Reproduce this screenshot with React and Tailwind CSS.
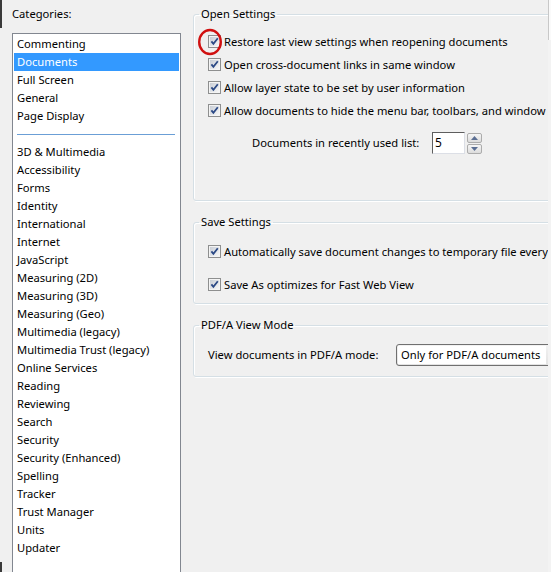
import React from "react";

const topItems = ["Commenting", "Documents", "Full Screen", "General", "Page Display"];
const bottomItems = [
  "3D & Multimedia",
  "Accessibility",
  "Forms",
  "Identity",
  "International",
  "Internet",
  "JavaScript",
  "Measuring (2D)",
  "Measuring (3D)",
  "Measuring (Geo)",
  "Multimedia (legacy)",
  "Multimedia Trust (legacy)",
  "Online Services",
  "Reading",
  "Reviewing",
  "Search",
  "Security",
  "Security (Enhanced)",
  "Spelling",
  "Tracker",
  "Trust Manager",
  "Units",
  "Updater",
];

function Check() {
  return (
    <svg width="13" height="13" viewBox="0 0 13 13" className="shrink-0">
      <defs>
        <linearGradient id="cbg" x1="0" y1="0" x2="1" y2="1">
          <stop offset="0" stopColor="#c9ced6" />
          <stop offset="1" stopColor="#f7f7f7" />
        </linearGradient>
      </defs>
      <rect x="0.5" y="0.5" width="12" height="12" fill="#f4f4f4" stroke="#8e8f8f" />
      <rect x="2" y="2" width="9" height="9" fill="url(#cbg)" />
      <path d="M3.4 6.4 L5.4 8.9 L9.8 3.3" fill="none" stroke="#2c4a86" strokeWidth="1.8" strokeLinejoin="miter" />
    </svg>
  );
}

function Row({ children, circled }) {
  return (
    <div className="relative flex h-[23px] items-center gap-[3px]">
      <Check />
      <span className="whitespace-nowrap">{children}</span>
      {circled && (
        <svg width="26" height="28" viewBox="0 0 26 28" className="pointer-events-none absolute left-[-11px] top-[-2px]">
          <ellipse cx="13" cy="14" rx="10.8" ry="12" fill="none" stroke="#d01010" strokeWidth="2.4" />
        </svg>
      )}
    </div>
  );
}

function Group({ title, children, className = "" }) {
  return (
    <fieldset className={`w-[420px] rounded-[3px] border border-[#d5dfe5] p-0 shadow-[inset_1px_1px_0_#fff,1px_1px_0_#fff] ${className}`}>
      <legend className="ml-[5px] px-[2px] leading-[16px]">{title}</legend>
      {children}
    </fieldset>
  );
}

export default function App() {
  return (
    <div className="flex h-[572px] w-[551px] overflow-hidden bg-[#f0f0f0] font-['Noto_Sans',sans-serif] text-[11.2px] leading-[16px] text-black">
      <div className="flex w-[2px] flex-col justify-between">
        <div className="h-[28px] bg-[#3a3a3a]" />
        <div className="h-[10px] bg-[#3a3a3a]" />
      </div>

      <div className="flex w-[191px] shrink-0 flex-col pl-[10px] pt-[6px]">
        <div className="h-[16px]">Categories:</div>
        <div className="mt-[11px] w-[169px] flex-1 overflow-hidden border-x border-t border-[#828790] bg-white pt-[1px]">
          {topItems.map((t) => (
            <div
              key={t}
              className={`mx-[1px] flex h-[18px] items-center whitespace-nowrap pl-[3px] ${
                t === "Documents" ? "bg-[#3399ff] text-white" : ""
              }`}
            >
              {t}
            </div>
          ))}
          <div className="flex h-[18px] items-center px-[4px]">
            <div className="h-px w-[158px] bg-[#6b9fd6]" />
          </div>
          {bottomItems.map((t) => (
            <div key={t} className="mx-[1px] flex h-[18px] items-center whitespace-nowrap pl-[3px]">
              {t}
            </div>
          ))}
        </div>
      </div>

      <div className="w-[355px] shrink-0 overflow-hidden pt-[6px]">
        <Group title="Open Settings">
          <div className="pb-[46px] pl-[14px] pt-[8px]">
            <Row circled>Restore last view settings when reopening documents</Row>
            <Row>Open cross-document links in same window</Row>
            <Row>Allow layer state to be set by user information</Row>
            <Row>Allow documents to hide the menu bar, toolbars, and window controls</Row>
            <div className="ml-[44px] mt-[10px] flex h-[22px] items-center">
              <span className="w-[180px] whitespace-nowrap">Documents in recently used list:</span>
              <div className="flex h-[22px] w-[33px] items-center border border-b-[#dcdfe6] border-l-[#5e5e5e] border-r-[#dcdfe6] border-t-[#5e5e5e] bg-white pl-[2px] text-[12px]">
                5
              </div>
              <div className="ml-[2px] flex h-[21px] w-[15px] flex-col justify-between">
                <div className="flex h-[10px] items-center justify-center rounded-[2px] border border-[#acacac] bg-gradient-to-b from-[#f6f6f6] to-[#dcdcdc]">
                  <svg width="7" height="4" viewBox="0 0 7 4">
                    <path d="M0 4 L3.5 0 L7 4 Z" fill="#5b6f93" />
                  </svg>
                </div>
                <div className="flex h-[10px] items-center justify-center rounded-[2px] border border-[#acacac] bg-gradient-to-b from-[#f6f6f6] to-[#dcdcdc]">
                  <svg width="7" height="4" viewBox="0 0 7 4">
                    <path d="M0 0 L3.5 4 L7 0 Z" fill="#5b6f93" />
                  </svg>
                </div>
              </div>
            </div>
          </div>
        </Group>

        <Group title="Save Settings" className="mt-[13px]">
          <div className="pb-[7px] pl-[14px] pt-[10px]">
            <Row>Automatically save document changes to temporary file every 5 minutes</Row>
            <div className="mt-[10px]">
              <Row>Save As optimizes for Fast Web View</Row>
            </div>
          </div>
        </Group>

        <Group title="PDF/A View Mode" className="mt-[13px]">
          <div className="flex items-center pb-[10px] pl-[14px] pt-[11px]">
            <span className="w-[188px] whitespace-nowrap">View documents in PDF/A mode:</span>
            <div className="flex h-[22px] w-[200px] items-center rounded-[3px] border border-[#707070] bg-gradient-to-b from-[#f2f2f2] to-[#e3e3e3] pl-[1px]">
              <div className="flex h-[18px] w-[148px] items-center whitespace-nowrap bg-white pl-[3px]">
                Only for PDF/A documents
              </div>
            </div>
          </div>
        </Group>
      </div>

      <div className="flex w-[3px] shrink-0 flex-col">
        <div className="h-[40px] border-l border-[#c8c8c8] bg-[#fafafa]" />
        <div className="flex-1 bg-[#f3f3f3]" />
      </div>
    </div>
  );
}
